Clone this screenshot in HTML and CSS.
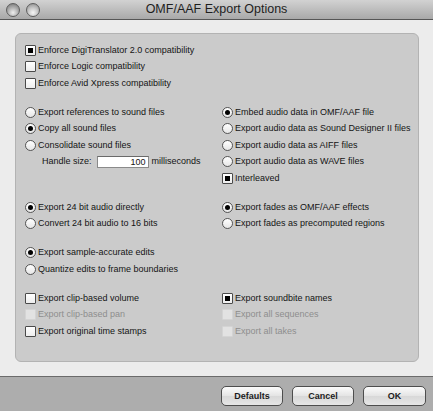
FILE: index.html
```html
<!DOCTYPE html>
<html>
<head>
<meta charset="utf-8">
<title>OMF/AAF Export Options</title>
<link rel="stylesheet" href="styles.css">
</head>
<body>
<div class="window">
  <div class="titlebar">
    <div class="lights">
      <span class="light light-a"></span>
      <span class="light light-b"></span>
    </div>
    <div class="title">OMF/AAF Export Options</div>
  </div>
  <div class="content">
    <div class="panel">
      <div class="group single">
        <div class="col">
          <div class="row"><span class="cb on"></span><span class="lbl">Enforce DigiTranslator 2.0 compatibility</span></div>
          <div class="row"><span class="cb"></span><span class="lbl">Enforce Logic compatibility</span></div>
          <div class="row"><span class="cb"></span><span class="lbl">Enforce Avid Xpress compatibility</span></div>
        </div>
      </div>

      <div class="group">
        <div class="col">
          <div class="row"><span class="rb"></span><span class="lbl">Export references to sound files</span></div>
          <div class="row"><span class="rb on"></span><span class="lbl">Copy all sound files</span></div>
          <div class="row"><span class="rb"></span><span class="lbl">Consolidate sound files</span></div>
          <div class="row handle"><span class="lbl">Handle size:</span><span class="field">100</span><span class="lbl">milliseconds</span></div>
        </div>
        <div class="col">
          <div class="row"><span class="rb on"></span><span class="lbl">Embed audio data in OMF/AAF file</span></div>
          <div class="row"><span class="rb"></span><span class="lbl">Export audio data as Sound Designer II files</span></div>
          <div class="row"><span class="rb"></span><span class="lbl">Export audio data as AIFF files</span></div>
          <div class="row"><span class="rb"></span><span class="lbl">Export audio data as WAVE files</span></div>
          <div class="row"><span class="cb on"></span><span class="lbl">Interleaved</span></div>
        </div>
      </div>

      <div class="group">
        <div class="col">
          <div class="row"><span class="rb on"></span><span class="lbl">Export 24 bit audio directly</span></div>
          <div class="row"><span class="rb"></span><span class="lbl">Convert 24 bit audio to 16 bits</span></div>
        </div>
        <div class="col">
          <div class="row"><span class="rb on"></span><span class="lbl">Export fades as OMF/AAF effects</span></div>
          <div class="row"><span class="rb"></span><span class="lbl">Export fades as precomputed regions</span></div>
        </div>
      </div>

      <div class="group">
        <div class="col">
          <div class="row"><span class="rb on"></span><span class="lbl">Export sample-accurate edits</span></div>
          <div class="row"><span class="rb"></span><span class="lbl">Quantize edits to frame boundaries</span></div>
        </div>
      </div>

      <div class="group">
        <div class="col">
          <div class="row"><span class="cb"></span><span class="lbl">Export clip-based volume</span></div>
          <div class="row disabled"><span class="cb"></span><span class="lbl">Export clip-based pan</span></div>
          <div class="row"><span class="cb"></span><span class="lbl">Export original time stamps</span></div>
        </div>
        <div class="col">
          <div class="row"><span class="cb on"></span><span class="lbl">Export soundbite names</span></div>
          <div class="row disabled"><span class="cb"></span><span class="lbl">Export all sequences</span></div>
          <div class="row disabled"><span class="cb"></span><span class="lbl">Export all takes</span></div>
        </div>
      </div>
    </div>
  </div>
  <div class="footer">
    <button class="btn">Defaults</button>
    <button class="btn">Cancel</button>
    <button class="btn ok">OK</button>
  </div>
</div>
</body>
</html>
```

FILE: styles.css
```css
html, body {
  margin: 0;
  padding: 0;
}
body {
  width: 433px;
  height: 411px;
  overflow: hidden;
  font-family: "Liberation Sans", Arial, sans-serif;
  background: #ececec;
}
.window {
  display: flex;
  flex-direction: column;
  width: 433px;
  height: 411px;
}
.titlebar {
  position: relative;
  height: 19px;
  flex: none;
  background: linear-gradient(#d2d2d2, #a9a9a9);
  border-bottom: 1px solid #565656;
  display: flex;
  align-items: center;
  justify-content: center;
}
.lights {
  position: absolute;
  left: 6px;
  top: 3px;
  display: flex;
  gap: 6px;
}
.light {
  width: 12px;
  height: 12px;
  border-radius: 50%;
  border: 1px solid #5e5e5e;
  background: radial-gradient(circle at 50% 72%, #eeeeee 0, #b4b4b4 45%, #6f6f6f 100%);
}
.light-b {
  background: radial-gradient(circle at 50% 72%, #f6f6f6 0, #c8c8c8 45%, #858585 100%);
}
.title {
  font-size: 12.5px;
  color: #1e1e1e;
  line-height: 19px;
}
.content {
  flex: none;
  height: 356px;
  box-sizing: border-box;
  background: #ececec;
  padding: 13px 14px 14px 15px;
}
.panel {
  height: 329px;
  box-sizing: border-box;
  border: 1px solid #b3b3b3;
  border-radius: 6px;
  background: #cbcbcb;
  padding: 8px 0 0 9px;
  display: flex;
  flex-direction: column;
  gap: 12.5px;
}
.group {
  display: grid;
  grid-template-columns: 197px 1fr;
}
.col {
  display: flex;
  flex-direction: column;
}
.row {
  height: 16.5px;
  display: flex;
  align-items: center;
  font-size: 9px;
  color: #141414;
  white-space: nowrap;
}
.lbl {
  line-height: 11px;
}
.cb, .rb {
  flex: none;
  width: 11px;
  height: 11px;
  box-sizing: border-box;
  margin-right: 2px;
  display: flex;
  align-items: center;
  justify-content: center;
}
.cb {
  border: 1px solid #4a4a4a;
  border-radius: 1px;
  background: linear-gradient(#ffffff, #ededed);
}
.cb.on::after {
  content: "";
  width: 5px;
  height: 5px;
  background: #000;
}
.rb {
  border: 1px solid #555555;
  border-radius: 50%;
  background: linear-gradient(#ffffff, #e6e6e6);
}
.rb.on::after {
  content: "";
  width: 5px;
  height: 5px;
  border-radius: 50%;
  background: #000;
}
.row.disabled {
  color: #8e8e8e;
}
.row.disabled .cb {
  border-color: #d4d4d4;
  background: #e2e2e2;
}
.handle {
  padding-left: 17px;
}
.field {
  width: 52px;
  height: 12px;
  box-sizing: border-box;
  margin: 0 3px 0 5px;
  background: #fff;
  border: 1px solid #8a8a8a;
  border-top-color: #6a6a6a;
  text-align: right;
  padding-right: 2px;
  font-size: 9px;
  line-height: 10px;
}
.footer {
  flex: none;
  height: 35px;
  box-sizing: border-box;
  border-top: 1px solid #6b6b6b;
  background: #adadad;
  display: flex;
  justify-content: flex-end;
  align-items: flex-start;
  padding: 9px 7px 0 0;
  gap: 9px;
}
.btn {
  width: 62px;
  height: 20px;
  border: 1px solid #4d4d4d;
  border-radius: 5px;
  background: linear-gradient(#fbfbfb, #e4e4e4 50%, #d8d8d8 51%, #e6e6e6);
  font-family: "Liberation Sans", Arial, sans-serif;
  font-weight: bold;
  font-size: 9px;
  color: #1c1c1c;
  padding: 0;
  margin: 0;
}
.btn.ok {
  width: 63px;
}
```
